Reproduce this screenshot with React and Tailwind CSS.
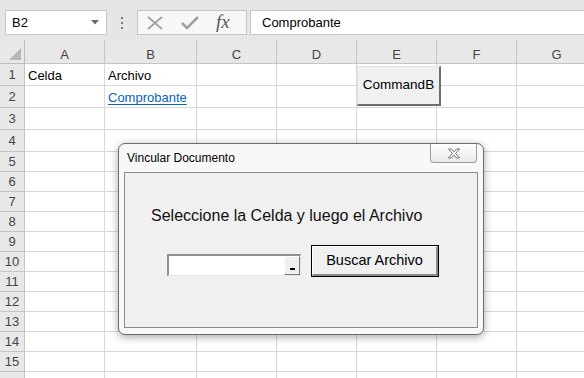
import React from 'react';

const columns = [
  { label: 'A', w: 'w-[80px]' },
  { label: 'B', w: 'w-[92px]' },
  { label: 'C', w: 'w-[80px]' },
  { label: 'D', w: 'w-[80px]' },
  { label: 'E', w: 'w-[80px]' },
  { label: 'F', w: 'w-[80px]' },
  { label: 'G', w: 'w-[80px]' },
];

// row 16 only peeks in at the bottom edge, its number is out of view
const rows = Array.from({ length: 16 }, (_, i) => ({
  n: i + 1,
  h: i < 4 ? 'h-[22px]' : 'h-[20px]',
  label: i < 15 ? String(i + 1) : '',
}));

// cell contents keyed by "row-col"
const cells = {
  '1-A': { text: 'Celda' },
  '1-B': { text: 'Archivo' },
  '2-B': { text: 'Comprobante', link: true },
};

const CloseGlyph = () => (
  <svg width="14" height="11" viewBox="0 0 14 11">
    <polygon
      points="1.5,1 4.5,1 7,3.8 9.5,1 12.5,1 8.6,5.5 12.5,10 9.5,10 7,7.2 4.5,10 1.5,10 5.4,5.5"
      fill="#ffffff"
      stroke="#6f6f6f"
      strokeWidth="1"
      strokeLinejoin="round"
    />
  </svg>
);

const FormulaBar = () => (
  <div className="h-[40px] bg-[#e6e6e6] flex items-start pt-[10px] pl-[5px]">
    {/* Name box */}
    <div className="w-[102px] h-[25px] bg-white border border-[#c6c6c6] flex items-center pl-[6px] pr-[7px] text-[13px] text-black">
      <span className="flex-1">B2</span>
      <svg width="8" height="5" viewBox="0 0 8 5">
        <polygon points="0,0 8,0 4,4.5" fill="#6a6a6a" />
      </svg>
    </div>
    {/* Grip dots */}
    <div className="w-[30px] h-[25px] flex flex-col items-center justify-center gap-[3px]">
      <div className="w-[2px] h-[2px] bg-[#7a7a7a]" />
      <div className="w-[2px] h-[2px] bg-[#7a7a7a]" />
      <div className="w-[2px] h-[2px] bg-[#7a7a7a]" />
    </div>
    {/* Cancel / enter / fx */}
    <div className="w-[110px] h-[25px] bg-[#f7f7f7] border border-[#c6c6c6] flex items-center pl-[7px]">
      <svg width="20" height="14" viewBox="0 0 20 14" className="mr-[16px]">
        <path d="M3 1 L17 13 M17 1 L3 13" stroke="#a0a0a0" strokeWidth="1.8" />
      </svg>
      <svg width="18" height="14" viewBox="0 0 18 14" className="mr-[17px]">
        <path d="M1 7 L6 12 L17 1" stroke="#a0a0a0" strokeWidth="2.6" fill="none" />
      </svg>
      <span className="font-['Liberation_Serif',serif] italic text-[19px] leading-none text-[#555] -mt-[2px]">fx</span>
    </div>
    {/* Formula input */}
    <div className="ml-[3px] flex-1 h-[25px] bg-white border border-[#c6c6c6] border-r-0 flex items-center pl-[11px] text-[13px] text-black">
      Comprobante
    </div>
  </div>
);

const Sheet = () => (
  <div className="flex flex-col">
    {/* column headers */}
    <div className="flex h-[24px]">
      <div className="w-[25px] shrink-0 bg-[#e8e8e8] border-r border-b border-[#bdbdbd] flex items-end justify-end pr-[3px] pb-[3px]">
        <svg width="12" height="12" viewBox="0 0 12 12">
          <polygon points="12,0 12,12 0,12" fill="#b5b5b5" />
        </svg>
      </div>
      {columns.map((c) => (
        <div
          key={c.label}
          className={`${c.w} shrink-0 bg-[#e8e8e8] border-r border-b border-[#c4c4c4] flex items-center justify-center pt-[6px] text-[13px] text-[#444]`}
        >
          {c.label}
        </div>
      ))}
    </div>
    {rows.map((r) => (
      <div key={r.n} className={`flex ${r.h}`}>
        <div className="w-[25px] shrink-0 bg-[#e8e8e8] border-r border-b border-[#c4c4c4] flex items-center justify-center pt-[1px] text-[13px] text-[#444]">
          {r.label}
        </div>
        {columns.map((c) => {
          const cell = cells[`${r.n}-${c.label}`];
          return (
            <div
              key={c.label}
              className={`${c.w} shrink-0 border-r border-b border-[#d8d8d8] flex items-center pl-[3px] pt-[3px] text-[13px] whitespace-nowrap overflow-visible`}
            >
              {cell &&
                (cell.link ? (
                  <span className="text-[#0563c1] underline underline-offset-2">{cell.text}</span>
                ) : (
                  <span className="text-black">{cell.text}</span>
                ))}
            </div>
          );
        })}
      </div>
    ))}
  </div>
);

const Dialog = () => (
  <div className="absolute left-[118px] top-[143px] w-[366px] h-[192px] rounded-[7px] border border-[#6b6b6b] bg-[#f8f8f8] shadow-[0_2px_9px_rgba(0,0,0,0.35)] flex flex-col px-[5px] pb-[6px]">
    {/* title bar */}
    <div className="h-[28px] shrink-0 relative flex items-center pl-[3px] text-[12px] text-black">
      Vincular Documento
      <div className="absolute right-[1px] top-0 w-[47px] h-[19px] rounded-b-[4px] border border-t-0 border-[#9a9a9a] bg-gradient-to-b from-[#ffffff] to-[#e9e9e9] flex items-center justify-center">
        <CloseGlyph />
      </div>
    </div>
    {/* client area */}
    <div className="flex-1 bg-[#f0f0f0] border border-[#8a8a8a] flex flex-col pl-[26px] pt-[33px]">
      <div className="text-[16px] leading-[20px] text-[#111] whitespace-nowrap">
        Seleccione la Celda y luego el Archivo
      </div>
      <div className="flex items-start mt-[19px] ml-[16px]">
        {/* RefEdit box */}
        <div className="mt-[9px] w-[134px] h-[22px] bg-white border-t-2 border-l-2 border-t-[#8e8e8e] border-l-[#8e8e8e] border-b border-r border-b-[#e3e3e3] border-r-[#e3e3e3] flex justify-end items-stretch">
          <div className="w-[16px] bg-[#f0f0f0] border-t border-l border-t-white border-l-white border-b border-r border-b-[#7a7a7a] border-r-[#7a7a7a] flex items-end justify-center pb-[4px]">
            <div className="w-[5px] h-[2px] bg-black" />
          </div>
        </div>
        {/* Buscar button */}
        <div className="ml-[10px] w-[128px] h-[32px] border border-black bg-[#f0f0f0]">
          <div className="w-full h-full border-t border-l border-t-white border-l-white border-b-2 border-r-2 border-b-[#8a8a8a] border-r-[#8a8a8a] flex items-center justify-center text-[14.5px] text-black">
            Buscar Archivo
          </div>
        </div>
      </div>
    </div>
  </div>
);

export default function App() {
  return (
    <div className="w-[584px] h-[378px] overflow-hidden relative bg-white font-['Liberation_Sans',Arial,sans-serif]">
      <FormulaBar />
      <Sheet />
      {/* ActiveX command button on the sheet */}
      <div className="absolute left-[357px] top-[66px] w-[84px] h-[40px] bg-[#f0f0f0] border-t border-l border-t-[#e3e3e3] border-l-[#e3e3e3] border-b-2 border-r-2 border-b-[#6d6d6d] border-r-[#6d6d6d] flex items-center justify-center text-[13.5px] text-black">
        CommandB
      </div>
      <Dialog />
    </div>
  );
}
